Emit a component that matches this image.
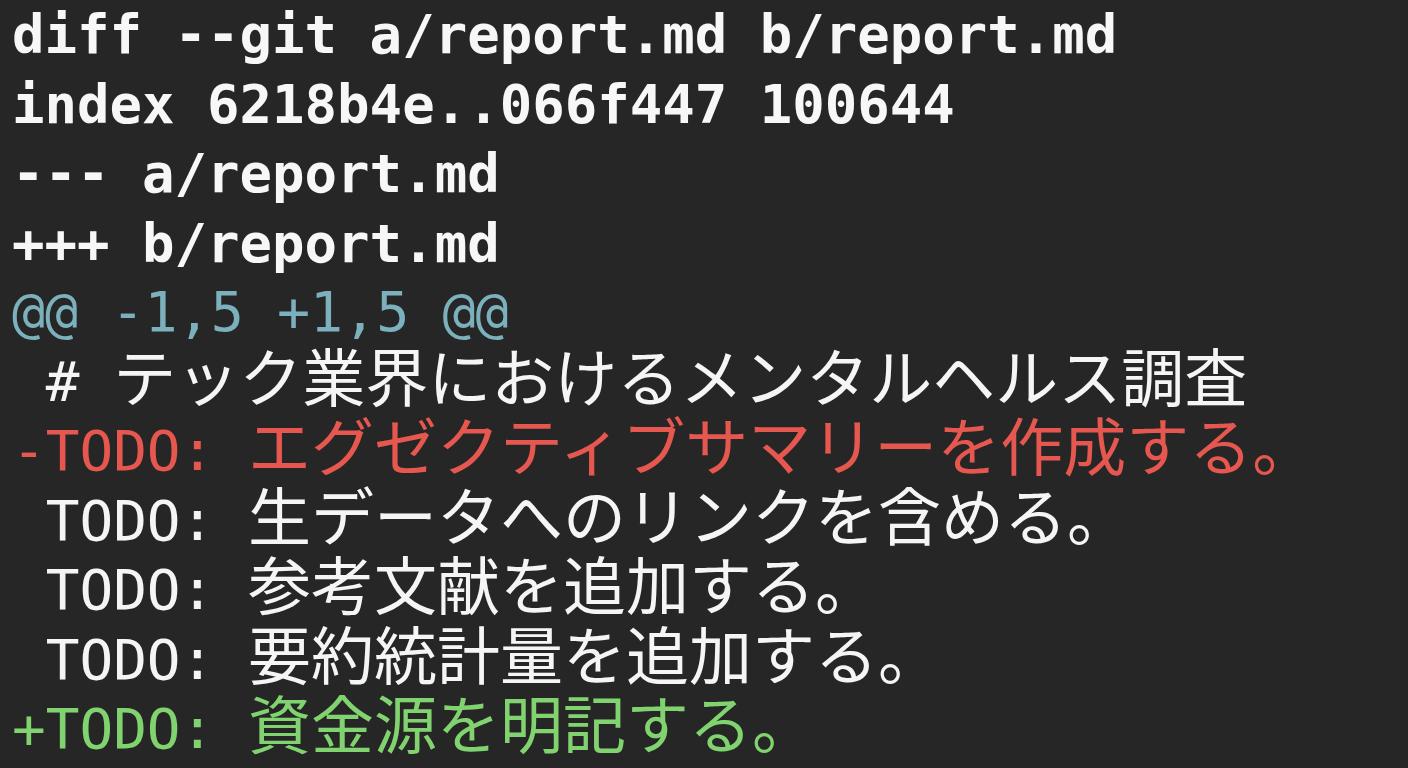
const mono = "font-['DejaVu_Sans_Mono','Noto_Sans_CJK_JP',monospace]"
const jp = "font-['Noto_Sans_CJK_JP',sans-serif]"

type Seg = { t: string; jp?: boolean }
type Line = { segs: Seg[]; color: string; bold?: boolean; size?: string }

const header: Line[] = [
  { segs: [{ t: 'diff --git a/report.md b/report.md' }], color: 'text-[#f7f7f7]', bold: true },
  { segs: [{ t: 'index 6218b4e..066f447 100644' }], color: 'text-[#f7f7f7]', bold: true },
  { segs: [{ t: '--- a/report.md' }], color: 'text-[#f7f7f7]', bold: true },
  { segs: [{ t: '+++ b/report.md' }], color: 'text-[#f7f7f7]', bold: true },
  { segs: [{ t: '@@ -1,5 +1,5 @@' }], color: 'text-[#7bb0bc]', size: 'text-[55px]' },
]

const body: Line[] = [
  { segs: [{ t: ' # ' }, { t: 'テック業界におけるメンタルヘルス調査', jp: true }], color: 'text-[#f5f5f5]' },
  { segs: [{ t: '-TODO: ' }, { t: 'エグゼクティブサマリーを作成する。', jp: true }], color: 'text-[#e5574f]' },
  { segs: [{ t: ' TODO: ' }, { t: '生データへのリンクを含める。', jp: true }], color: 'text-[#f5f5f5]' },
  { segs: [{ t: ' TODO: ' }, { t: '参考文献を追加する。', jp: true }], color: 'text-[#f5f5f5]' },
  { segs: [{ t: ' TODO: ' }, { t: '要約統計量を追加する。', jp: true }], color: 'text-[#f5f5f5]' },
  { segs: [{ t: '+TODO: ' }, { t: '資金源を明記する。', jp: true }], color: 'text-[#80d36f]' },
]

function DiffLine({ line, big }: { line: Line; big?: boolean }) {
  const size = line.size ?? (big ? 'text-[56px]' : 'text-[54px]')
  return (
    <div
      className={`h-[69.5px] leading-[69.5px] whitespace-pre ${line.color} ${line.bold ? 'font-bold' : 'font-normal'}`}
    >
      {line.segs.map((s, j) =>
        s.jp ? (
          <span key={j} className={`${jp} text-[63px] leading-[69.5px]`}>
            {s.t}
          </span>
        ) : (
          <span key={j} className={`${mono} ${size} leading-[69.5px]`}>
            {s.t}
          </span>
        ),
      )}
    </div>
  )
}

export default function App() {
  return (
    <div className="w-[1408px] h-[768px] overflow-hidden bg-[#262626] pl-[12px]">
      <div>
        {header.map((line, i) => (
          <DiffLine key={i} line={line} />
        ))}
      </div>
      <div className="-mt-[9px]">
        {body.map((line, i) => (
          <DiffLine key={i} line={line} big />
        ))}
      </div>
    </div>
  )
}
